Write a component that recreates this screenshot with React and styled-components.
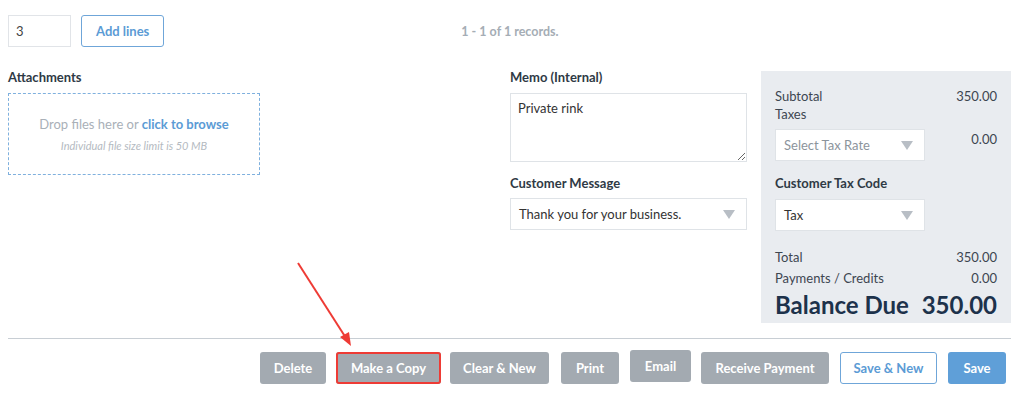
import React from "react";
import styled, { createGlobalStyle } from "styled-components";

const Global = createGlobalStyle`
  html, body { margin: 0; padding: 0; background: #fff; }
  body { font-family: Lato, "Open Sans", sans-serif; color: #333; font-size: 13px; }
  * { box-sizing: border-box; }
`;

const Page = styled.div`
  position: relative;
  width: 1024px;
  height: 395px;
  padding: 15px 13px 0 8px;
`;

const TopRow = styled.div`
  display: flex;
  align-items: center;
  height: 32px;
`;

const CountInput = styled.div`
  width: 63px;
  height: 32px;
  border: 1px solid #e1e4e8;
  padding: 0 7px;
  display: flex;
  align-items: center;
  font-size: 13px;
  color: #444;
`;

const OutlineButton = styled.button`
  height: 32px;
  width: ${(p) => (p.$w ? `${p.$w}px` : "auto")};
  padding: 0 ${(p) => p.$px || 0}px;
  margin-left: ${(p) => p.$ml || 0}px;
  border: 1px solid #6fa6d9;
  border-radius: 3px;
  background: #fff;
  color: #5b9bd5;
  font-family: inherit;
  font-weight: 700;
  font-size: 13px;
`;

const Records = styled.div`
  margin-left: 297px;
  color: #a5adb5;
  font-weight: 700;
  font-size: 12.5px;
`;

const Main = styled.div`
  display: grid;
  grid-template-columns: 252px 250px 237px 14px 250px;
  align-items: start;
  margin-top: 22px;
`;

const Column = styled.div`
  display: flex;
  flex-direction: column;
`;

const Label = styled.div`
  font-weight: 700;
  font-size: 13px;
  color: #2f3a45;
  line-height: 16px;
  margin-top: ${(p) => p.$mt || 0}px;
  margin-bottom: ${(p) => p.$mb || 0}px;
`;

const DropZone = styled.div`
  margin-top: 8px;
  height: 82px;
  border: 1px dashed #7fb0de;
  display: flex;
  flex-direction: column;
  align-items: center;
  justify-content: center;
  gap: 7px;
`;

const DropText = styled.div`
  color: #a9b0b8;
  font-size: 13px;
`;

const Link = styled.span`
  color: #5b9bd5;
  font-weight: 700;
`;

const SmallNote = styled.div`
  color: #b4bac1;
  font-size: 11px;
  font-style: italic;
`;

const Memo = styled.textarea`
  margin-top: 8px;
  height: 69px;
  border: 1px solid #dfe3e7;
  padding: 6px 7px;
  font-family: inherit;
  font-size: 13px;
  color: #333;
  resize: vertical;
  outline: none;
`;

const Select = styled.div`
  width: ${(p) => p.$w || "100%"};
  height: 32px;
  border: 1px solid #dfe3e7;
  background: #fff;
  display: flex;
  align-items: center;
  justify-content: space-between;
  padding: 0 11px 0 8px;
  font-size: 13px;
  color: ${(p) => (p.$muted ? "#8c949c" : "#333")};
`;

const Caret = styled.span`
  width: 0;
  height: 0;
  border-left: 6px solid transparent;
  border-right: 6px solid transparent;
  border-top: 9px solid #b8bec5;
`;

const Panel = styled.div`
  background: #e9ecf0;
  height: 252px;
  margin-top: 2px;
  padding: 16px 14px 0 14px;
  display: flex;
  flex-direction: column;
`;

const Line = styled.div`
  display: flex;
  justify-content: space-between;
  align-items: ${(p) => p.$align || "center"};
  line-height: 18px;
  font-size: 13px;
  color: #3d4650;
  margin-top: ${(p) => p.$mt || 0}px;
`;

const Value = styled.span`
  padding-top: ${(p) => p.$pt || 0}px;
`;

const Balance = styled.div`
  display: flex;
  justify-content: space-between;
  margin-top: 3px;
  font-size: 24px;
  font-weight: 700;
  color: #1d324b;
  line-height: 30px;
`;

const Footer = styled.div`
  margin-top: 15px;
  border-top: 1px solid #c8ced4;
  display: flex;
  justify-content: flex-end;
  align-items: flex-start;
  padding-top: 13px;
  padding-right: 5px;
`;

const GrayButton = styled.button`
  height: 32px;
  width: ${(p) => p.$w}px;
  padding: 0;
  border: none;
  border-radius: 3px;
  background: #a3aab1;
  color: #fff;
  font-family: inherit;
  font-weight: 700;
  font-size: 13px;
  margin-top: ${(p) => p.$mt || 0}px;
  margin-left: ${(p) => p.$ml || 0}px;
  outline: ${(p) => (p.$hl ? "2px solid #ee3b35" : "none")};
  outline-offset: -2px;
`;

const BlueButton = styled(GrayButton)`
  background: #5f9fd8;
`;

const Arrow = styled.svg`
  position: absolute;
  left: 290px;
  top: 258px;
`;

export default function App() {
  return (
    <Page>
      <Global />
      <TopRow>
        <CountInput>3</CountInput>
        <OutlineButton $ml={10} $px={14}>Add lines</OutlineButton>
        <Records>1 - 1 of 1 records.</Records>
      </TopRow>
      <Main>
        <Column>
          <Label>Attachments</Label>
          <DropZone>
            <DropText>
              Drop files here or <Link>click to browse</Link>
            </DropText>
            <SmallNote>Individual file size limit is 50 MB</SmallNote>
          </DropZone>
        </Column>
        <div />
        <Column>
          <Label>Memo (Internal)</Label>
          <Memo defaultValue="Private rink" />
          <Label $mt={13} $mb={7}>Customer Message</Label>
          <Select>
            Thank you for your business.
            <Caret />
          </Select>
        </Column>
        <div />
        <Panel>
          <Line>
            <span>Subtotal</span>
            <span>350.00</span>
          </Line>
          <Line>
            <span>Taxes</span>
          </Line>
          <Line $align="flex-start" $mt={6}>
            <Select $w="150px" $muted>
              Select Tax Rate
              <Caret />
            </Select>
            <Value $pt={1}>0.00</Value>
          </Line>
          <Label $mt={14} $mb={8}>Customer Tax Code</Label>
          <Select $w="150px">
            Tax
            <Caret />
          </Select>
          <Line $mt={17}>
            <span>Total</span>
            <span>350.00</span>
          </Line>
          <Line $mt={3}>
            <span>Payments / Credits</span>
            <span>0.00</span>
          </Line>
          <Balance>
            <span>Balance Due</span>
            <span>350.00</span>
          </Balance>
        </Panel>
      </Main>
      <Footer>
        <GrayButton $w={66}>Delete</GrayButton>
        <GrayButton $w={105} $ml={10} $hl>Make a Copy</GrayButton>
        <GrayButton $w={99} $ml={9}>Clear &amp; New</GrayButton>
        <GrayButton $w={58} $ml={12}>Print</GrayButton>
        <GrayButton $w={61} $ml={11} $mt={-2}>Email</GrayButton>
        <GrayButton $w={128} $ml={10}>Receive Payment</GrayButton>
        <OutlineButton $w={97} $ml={11}>Save &amp; New</OutlineButton>
        <BlueButton $w={58} $ml={11}>Save</BlueButton>
      </Footer>
      <Arrow width="70" height="92" viewBox="0 0 70 92">
        <line x1="8" y1="5" x2="56" y2="80" stroke="#ee3b35" strokeWidth="2" />
        <polygon points="61,88 50,79 59,74" fill="#ee3b35" />
      </Arrow>
    </Page>
  );
}
